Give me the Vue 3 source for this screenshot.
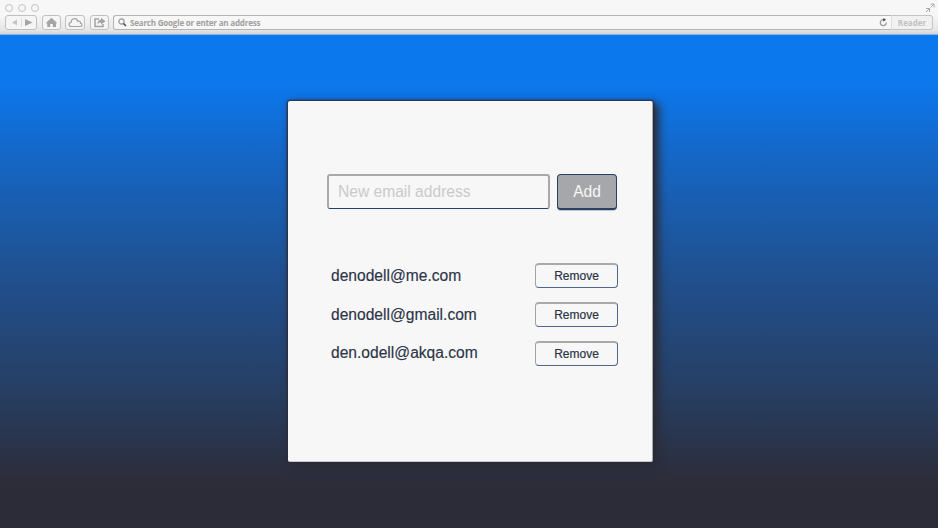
<script setup>
import { ref } from 'vue'

const draft = ref('')
const emails = ref(['denodell@me.com', 'denodell@gmail.com', 'den.odell@akqa.com'])

function add() {
  if (draft.value) emails.value.push(draft.value)
  draft.value = ''
}
function remove(index) {
  emails.value.splice(index, 1)
}
</script>

<template>
  <div class="window">
    <header class="chrome">
      <div class="titlebar">
        <i class="light"></i><i class="light"></i><i class="light"></i>
        <svg class="expand" width="10" height="10" viewBox="0 0 10 10">
          <path d="M5.5 1H9V4.5M9 1L5.5 4.5M1 5.5H4.5V9M4.5 5.5L1 9" fill="none" stroke="#a9a9a9" />
        </svg>
      </div>
      <div class="toolbar">
        <div class="tool nav">
          <svg width="28" height="11" viewBox="0 0 28 11">
            <path d="M10 2.5L5 5.5L10 8.5Z" fill="#c4c4c4" />
            <path d="M14.5 1V10" stroke="#dcdcdc" />
            <path d="M18 2L25.500 5.500L18 9Z" fill="#a5a5a5" />
          </svg>
        </div>
        <div class="tool home">
          <svg width="13" height="11" viewBox="0 0 13 11">
            <path d="M.8 6L6.500 .8L12.200 6L11 6.500V10H7.800V7H5.200V10H2.300V6.500Z" fill="#a5a5a5" />
          </svg>
        </div>
        <div class="tool cloud">
          <svg width="15" height="11" viewBox="0 0 15 11">
            <path d="M3.500 9.500C.3 9.500.2 5.800 3 5.500C3 1.200 8.700 .2 9.600 4.200C12 3.600 12.800 5.200 12.500 6.200C14.900 6.800 14.400 9.500 12.200 9.500Z" fill="none" stroke="#a2a2a2" stroke-width="1.200" />
          </svg>
        </div>
        <div class="tool share">
          <svg width="13" height="11" viewBox="0 0 13 11">
            <path d="M6 2H2V9.500H10V7" fill="none" stroke="#a2a2a2" stroke-width="1.500" />
            <path d="M4.500 7.500C4.500 4 6 2.800 8 2.800V.8L12.500 4.200L8 7.500V5.500C6.500 5.500 5.500 5.800 4.500 7.500Z" fill="#a2a2a2" />
          </svg>
        </div>
        <div class="address">
          <svg width="9" height="9" viewBox="0 0 9 9">
            <circle cx="3.500" cy="3.500" r="2.600" fill="none" stroke="#999" stroke-width="1.200" />
            <path d="M5.500 5.500L8 8" stroke="#3b4660" stroke-width="1.500" />
          </svg>
          <span class="hint">Search Google or enter an address</span>
          <svg class="reload" width="9" height="9" viewBox="0 0 9 9">
            <path d="M7.300 4.500A3 3 0 1 1 4.500 1.600" fill="none" stroke="#999" stroke-width="1.300" />
            <path d="M4.200 0L7.200 1.700L4.200 3.600Z" fill="#3b4660" />
          </svg>
        </div>
        <div class="reader">Reader</div>
      </div>
    </header>

    <main class="page">
      <section class="card">
        <form class="entry" @submit.prevent="add">
          <input v-model="draft" class="field" placeholder="New email address" />
          <button class="add">Add</button>
        </form>
        <ul class="list">
          <li v-for="(email, i) in emails" :key="email" class="row">
            <span class="email">{{ email }}</span>
            <button class="remove" @click="remove(i)">Remove</button>
          </li>
        </ul>
      </section>
    </main>
  </div>
</template>

<style>
body {
  overflow: hidden;
}
</style>

<style scoped>
* {
  box-sizing: border-box;
}
.window {
  display: flex;
  flex-direction: column;
  width: 938px;
  height: 528px;
  font-family: 'Liberation Sans', Arial, sans-serif;
}
.chrome {
  height: 35px;
  background: linear-gradient(#f7f7f7 15px, #e6e6e6 30px, #d4d4d4);
  border-bottom: 1px solid #8db4de;
}
.titlebar {
  display: flex;
  align-items: center;
  gap: 5px;
  height: 15px;
  padding: 0 3px 0 5px;
}
.light {
  width: 8px;
  height: 8px;
  border: 1px solid #c2c2c2;
  border-radius: 50%;
}
.expand {
  margin-left: auto;
}
.toolbar {
  display: flex;
  height: 15px;
  padding: 0 5px;
}
.tool {
  display: flex;
  align-items: center;
  justify-content: center;
  height: 15px;
  border: 1px solid #c0c0c0;
  border-radius: 3px;
  background: #f5f5f5;
}
.nav {
  width: 32px;
}
.home {
  width: 19px;
  margin-left: 5px;
}
.cloud {
  width: 20px;
  margin-left: 4px;
}
.share {
  width: 19px;
  margin-left: 5px;
}
.address {
  display: flex;
  align-items: center;
  flex: 1;
  margin-left: 4px;
  padding: 0 3px 0 4px;
  border: 1px solid #b4b4b4;
  border-right: 0;
  border-radius: 3px 0 0 3px;
  background: #f7f7f7;
}
.hint {
  margin-left: 3px;
  color: #a0a0a0;
  font: bold 8px/13px 'Open Sans', sans-serif;
  letter-spacing: -0.19px;
  white-space: nowrap;
}
.reload {
  margin-left: auto;
}
.reader {
  width: 42px;
  border: 1px solid #c4c4c4;
  border-left-color: #dcdcdc;
  border-radius: 0 3px 3px 0;
  background: #f1f1f1;
  color: #c2c2c2;
  font: bold 8px/13px 'Open Sans', sans-serif;
  text-align: center;
}
.page {
  flex: 1;
  padding: 66px 0 0 288px;
  background: linear-gradient(#0c78ee 0, #0c78ee 45px, #1664c0 134px, #20508f 240px, #264066 348px, #2c2c38 450px);
}
.card {
  width: 365px;
  height: 361px;
  padding: 73px 35px 0 39px;
  border-right: 1px solid #a9a9a9;
  border-bottom: 1px solid #c9c9c9;
  border-radius: 2px;
  background: #f7f7f7;
  box-shadow: 0 0 2px 1px #2c2c38, 4px 4px 9px 2px #2c2c38;
}
.entry {
  display: flex;
  gap: 7px;
}
.field {
  width: 223px;
  height: 35px;
  padding: 0 9px;
  border: 1px solid #264066;
  border-top: 2px solid #a9a9a9;
  border-left: 2px solid #a9a9a9;
  border-right: 2px solid #a9a9a9;
  border-radius: 3px;
  outline: 0;
  background: #f7f7f7;
  font: 15.600px 'Liberation Sans', Arial, sans-serif;
}
.field::placeholder {
  color: #cacaca;
  opacity: 1;
}
.add {
  width: 61px;
  height: 36px;
  padding: 0;
  border: 1px solid #264066;
  border-bottom-width: 2px;
  border-radius: 4px;
  background: #a6a7aa;
  box-shadow: 0 1px 0 #c5c5c5;
  color: #f7f7f7;
  font: 15.600px 'Liberation Sans', Arial, sans-serif;
}
.list {
  display: flex;
  flex-direction: column;
  gap: 14px;
  margin: 53px -1px 0 0;
  padding: 0 0 0 4px;
  list-style: none;
}
.row {
  display: flex;
  align-items: center;
  justify-content: space-between;
  height: 25px;
}
.email {
  color: #2c3448;
  font-size: 15.600px;
  -webkit-text-stroke: 0.15px #2c3448;
}
.row:last-child .email {
  padding-bottom: 2px;
}
.remove {
  width: 83px;
  height: 25px;
  padding: 0;
  border: 1px solid #51668a;
  border-top: 2px solid #a9a9a9;
  border-left-color: #a0a4aa;
  border-radius: 4px;
  background: #f7f7f7;
  color: #2c3448;
  font: 12px 'Liberation Sans', Arial, sans-serif;
  -webkit-text-stroke: 0.2px #2c3448;
}
</style>
